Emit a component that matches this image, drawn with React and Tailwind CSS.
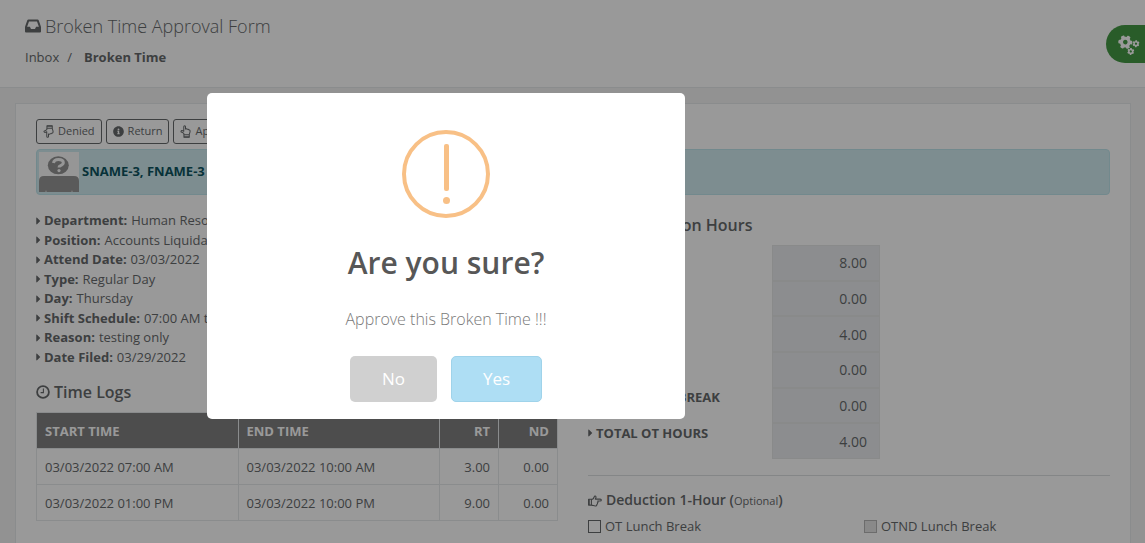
import React from "react";
import { FaInfoCircle, FaCaretRight, FaCogs } from "react-icons/fa";

const details = [
  ["Department:", "Human Resource"],
  ["Position:", "Accounts Liquidation"],
  ["Attend Date:", "03/03/2022"],
  ["Type:", "Regular Day"],
  ["Day:", "Thursday"],
  ["Shift Schedule:", "07:00 AM to 04:00 PM"],
  ["Reason:", "testing only"],
  ["Date Filed:", "03/29/2022"],
];

const logs = [
  ["03/03/2022 07:00 AM", "03/03/2022 10:00 AM", "3.00", "0.00"],
  ["03/03/2022 01:00 PM", "03/03/2022 10:00 PM", "9.00", "0.00"],
];

const hours = [
  ["rt", "RT HOURS", "8.00"],
  ["nd", "ND HOURS", "0.00"],
  ["ot", "OT HOURS", "4.00"],
  ["otnd", "OTND HOURS", "0.00"],
  ["lunch", "LESS LUNCH BREAK", "0.00"],
  ["total", "TOTAL OT HOURS", "4.00"],
];

function HandShape() {
  return (
    <>
      <path d="M3.4 4.3H4.5C5.6 3.7 5.9 2.6 6.3 1.6C6.600.7 8 .9 8 2.2C8 3 7.500 3.500 7.300 4.100H12.200C13.700 4.100 13.700 6 12.200 6H9.700C10.300 6.700 10 7.600 9.400 7.800C9.800 8.500 9.400 9.200 8.800 9.400C9 10.500 8.300 11 7.300 11C5.700 11 5 10.200 3.400 10.100" />
      <path d="M.6 4.3H3.4V10.1H.6Z" />
      <path d="M1.2 4.3V10.1" />
    </>
  );
}

function HandRight() {
  return (
    <svg viewBox="0 0 14 12" className="h-3 w-3.5" fill="none" stroke="currentColor" strokeWidth="1.1" strokeLinejoin="round" aria-hidden="true">
      <HandShape />
    </svg>
  );
}

function HandUp() {
  return (
    <svg viewBox="0 0 12 14" className="h-[13px] w-[11px]" fill="none" stroke="currentColor" strokeWidth="1.1" strokeLinejoin="round" aria-hidden="true">
      <g transform="translate(0 14) rotate(-90)">
        <HandShape />
      </g>
    </svg>
  );
}

function HandDown() {
  return (
    <svg viewBox="0 0 12 14" className="h-[13px] w-[11px]" fill="none" stroke="currentColor" strokeWidth="1.1" strokeLinejoin="round" aria-hidden="true">
      <g transform="scale(1 -1) rotate(-90)">
        <HandShape />
      </g>
    </svg>
  );
}

function Inbox() {
  return (
    <svg viewBox="0 0 16 14" className="h-3.5 w-4" fill="currentColor" fillRule="evenodd" aria-hidden="true">
      <path d="M3.500.5H12.500Q13.400.5 13.700 1.300L15.800 7.200Q16 7.700 16 8.200V12.500Q16 13.500 15 13.500H1Q0 13.500 0 12.500V8.200Q0 7.700.2 7.200L2.300 1.300Q2.600.5 3.500.5ZM4 2.500L2.100 7.700H4.900L6 9.900H10L11.100 7.700H13.900L12 2.500Z" />
    </svg>
  );
}

function Clock({ className }) {
  return (
    <svg viewBox="0 0 14 14" className={className} fill="none" stroke="currentColor" aria-hidden="true">
      <circle cx="7" cy="7" r="5.9" strokeWidth="1.8" />
      <path d="M7.4 3.6V7.6H4.6" strokeWidth="1.1" />
    </svg>
  );
}

function Avatar() {
  return (
    <svg viewBox="0 0 40 40" className="size-10 shrink-0" role="img" aria-label="Employee photo">
      <rect width="40" height="40" fill="#fafafa" />
      <path d="M0 40V29Q0 24 5 24H35Q40 24 40 29V40H33.500L33 38L32.500 40H7.500L7 38L6.500 40Z" fill="#969696" />
      <ellipse cx="19.300" cy="13.300" rx="10.500" ry="9" fill="#939393" />
      <path d="M14.500 11Q15 7.500 19.500 7.500Q24.300 7.500 24.300 10.600Q24.300 12.600 21.600 13.600Q20 14.200 20 15.600" fill="none" stroke="#fafafa" strokeWidth="3" />
      <circle cx="20" cy="18.600" r="1.600" fill="#fafafa" />
    </svg>
  );
}

function ActionButton({ icon, children }) {
  return (
    <button type="button" className="flex h-[25px] items-center gap-1 rounded-[3px] border border-[#676a6c] px-1.5 text-[11px]">
      {icon}
      {children}
    </button>
  );
}

function ConfirmDialog() {
  return (
    <div className="fixed inset-0 flex items-start justify-center bg-black/40 pt-[93px] pr-[253px]">
      <div role="alertdialog" aria-modal="true" aria-labelledby="confirm-title" className="flex w-[478px] flex-col items-center rounded-[5px] bg-white px-4 pt-[37px] pb-[17px] text-center">
        <svg viewBox="0 0 88 88" className="size-[88px]" aria-hidden="true">
          <circle cx="44" cy="44" r="42" fill="none" stroke="#f8c086" strokeWidth="4" />
          <rect x="42" y="14" width="5" height="47" rx="2" fill="#f8c086" />
          <circle cx="44.500" cy="70.500" r="3.500" fill="#f8c086" />
        </svg>
        <h2 id="confirm-title" className="mt-[25px] text-[30px] leading-10 font-semibold text-[#575757]">Are you sure?</h2>
        <p className="mt-6 text-base leading-6 font-light text-[#797979]">Approve this Broken Time !!!</p>
        <div className="mt-[25px] flex gap-3.5">
          <button type="button" className="h-[46px] rounded-[5px] bg-[#d0d0d0] px-8 text-[17px] font-medium text-white">No</button>
          <button type="button" className="h-[46px] rounded-[5px] border border-[#9fd3ea] bg-[#aedef4] px-[31px] text-[17px] font-medium text-white">Yes</button>
        </div>
      </div>
    </div>
  );
}

export default function App() {
  return (
    <div className="h-screen overflow-hidden bg-[#f3f3f4] font-['Open_Sans',sans-serif] text-[13px] leading-normal text-[#676a6c]">
      <header className="flex items-start justify-between border-b border-[#e7eaec] bg-white pt-3 pb-5 pl-[25px]">
        <div>
          <h1 className="flex items-center gap-1 text-lg leading-7 font-light">
            <Inbox />
            Broken Time Approval Form
          </h1>
          <nav aria-label="Breadcrumb" className="mt-[7px] flex leading-5">
            <a href="#inbox">Inbox</a>
            <span className="pr-3 pl-2">/</span>
            <strong aria-current="page">Broken Time</strong>
          </nav>
        </div>
        <button type="button" aria-label="Settings" className="mt-[13px] flex h-[38px] w-[39px] items-center rounded-l-full bg-[#459a45] pl-3 text-white">
          <FaCogs className="size-5 rotate-[34deg]" />
        </button>
      </header>

      <main className="mt-[15px] mr-[14px] ml-[15px] border border-[#e7eaec] bg-white px-5 pt-[15px] pb-5">
        <div className="flex gap-1">
          <ActionButton icon={<HandDown />}>Denied</ActionButton>
          <ActionButton icon={<FaInfoCircle className="size-[11px]" aria-hidden="true" />}>Return</ActionButton>
          <ActionButton icon={<HandUp />}>Approve</ActionButton>
        </div>

        <div className="mt-[5px] flex items-center gap-[3px] rounded border border-[#bee5eb] bg-[#d1ecf1] p-0.5 text-[#0c5460]">
          <Avatar />
          <strong>SNAME-3, FNAME-3</strong>
        </div>

        <div className="mt-4 grid grid-cols-2 gap-[30px]">
          <section>
            <ul>
              {details.map(([label, value]) => (
                <li key={label} className="flex items-center gap-1">
                  <FaCaretRight className="-mr-px h-3 w-[5px]" aria-hidden="true" />
                  <strong>{label}</strong>
                  <span>{value}</span>
                </li>
              ))}
            </ul>
            <h2 className="mt-[13px] flex items-center gap-1 text-base leading-6 font-semibold">
              <Clock className="size-3.5" />
              Time Logs
            </h2>
            <table className="mt-2 w-full table-fixed border-collapse leading-5">
              <colgroup>
                <col />
                <col />
                <col className="w-[59px]" />
                <col className="w-[59px]" />
              </colgroup>
              <thead>
                <tr className="h-9 bg-[#808080] text-white">
                  {["START TIME", "END TIME", "RT", "ND"].map((h, i) => (
                    <th key={h} scope="col" className={i > 1 ? "border border-[#e7eaec] px-2 text-right" : "border border-[#e7eaec] px-2 text-left"}>{h}</th>
                  ))}
                </tr>
              </thead>
              <tbody>
                {logs.map((row) => (
                  <tr key={row[0]} className="h-9">
                    {row.map((cell, i) => (
                      <td key={i} className={i > 1 ? "border border-[#e7eaec] px-2 text-right" : "border border-[#e7eaec] px-2 text-left"}>{cell}</td>
                    ))}
                  </tr>
                ))}
              </tbody>
            </table>
          </section>

          <section className="pt-0.5">
            <h2 className="flex items-center gap-1 text-base leading-6 font-semibold">
              <FaCaretRight className="w-2" aria-hidden="true" />
              Computation Hours
            </h2>
            <div className="mt-2 grid h-[214px] grid-rows-6">
              {hours.map(([id, label, value]) => (
                <div key={id} className="flex">
                  <label htmlFor={id} className="flex h-5 w-1/3 shrink-0 items-center gap-[3px] font-bold">
                    <FaCaretRight className="h-3 w-[5px]" aria-hidden="true" />
                    {label}
                  </label>
                  <input id={id} readOnly defaultValue={value} className="ml-[10px] h-full w-[108px] border border-[#e5e6e7] bg-[#e9ecef] px-3 text-right text-sm" />
                </div>
              ))}
            </div>
            <hr className="mt-4 border-[#dddfe1]" />
            <h3 className="mt-3 flex items-center gap-1 text-sm leading-6 font-semibold">
              <HandRight />
              <span>Deduction 1-Hour (<small className="text-[11px] font-normal">Optional</small>)</span>
            </h3>
            <div className="mt-1 grid grid-cols-2 gap-[30px]">
              <label className="flex items-center gap-1">
                <input type="checkbox" className="size-[13px] appearance-none border border-[#676a6c] bg-white" />
                OT Lunch Break
              </label>
              <label className="flex items-center gap-1">
                <input type="checkbox" disabled className="size-[13px] appearance-none border border-[#b4b4b4] bg-[#e4e4e4]" />
                OTND Lunch Break
              </label>
            </div>
          </section>
        </div>
      </main>

      <ConfirmDialog />
    </div>
  );
}
